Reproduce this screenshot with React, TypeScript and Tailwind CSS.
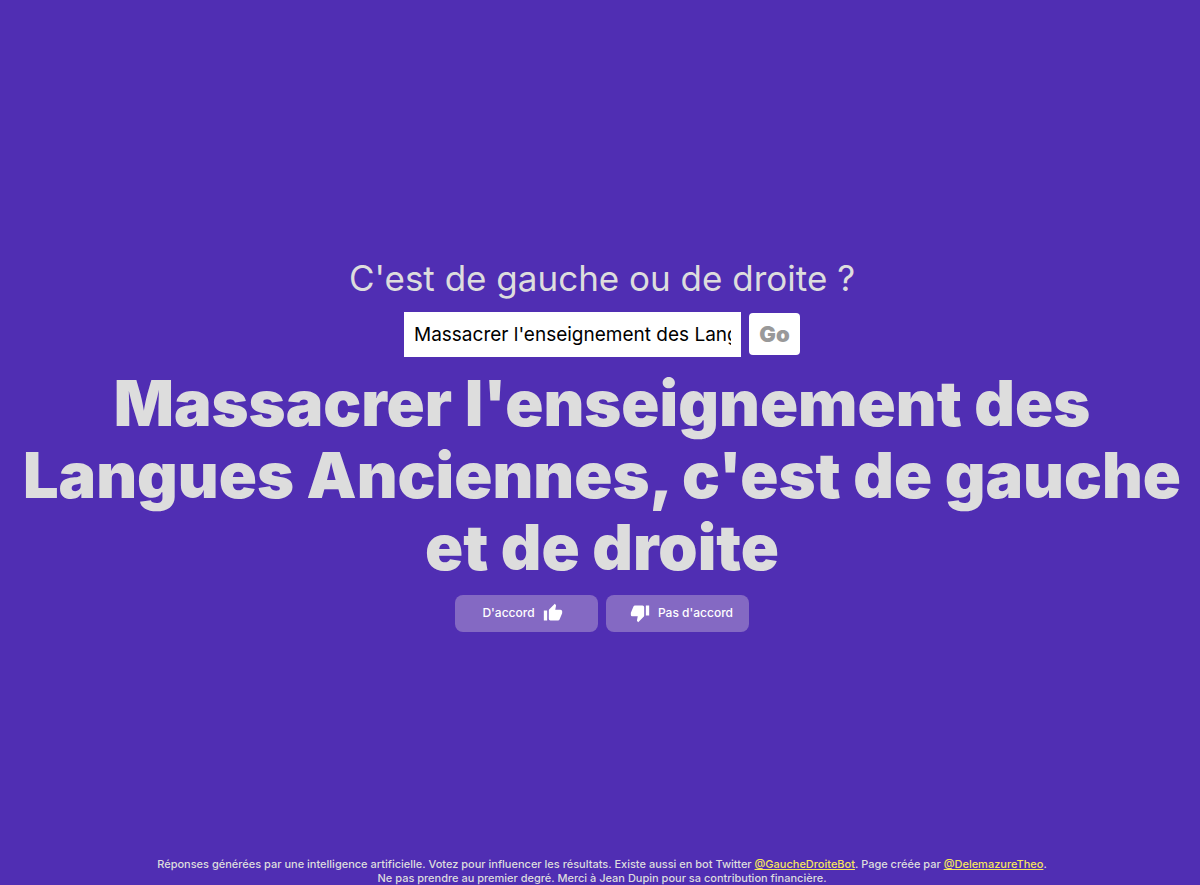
import { useState, type FormEvent } from 'react';
import { MdThumbDown, MdThumbUp } from 'react-icons/md';

const voteClass =
  'flex h-[37px] w-[143px] items-center justify-center gap-2 rounded-lg bg-[#8469c3] text-xs font-medium text-white';

export default function App() {
  const [subject, setSubject] = useState("Massacrer l'enseignement des Langues Anciennes");
  const [answer, setAnswer] = useState(subject);

  const handleSubmit = (e: FormEvent) => {
    e.preventDefault();
    setAnswer(subject);
  };

  return (
    <div className="flex min-h-screen flex-col bg-[#502eb3] pl-1 font-['Inter',sans-serif] text-[#dddddd]">
      <main className="flex flex-1 flex-col items-center justify-center px-3 pt-[30px] text-center">
        <form onSubmit={handleSubmit} className="flex flex-col items-center">
          <label htmlFor="subject" className="text-[35px] leading-[44px]">
            C'est de gauche ou de droite ?
          </label>
          <div className="mt-3 flex items-center gap-2">
            <input
              id="subject"
              type="text"
              value={subject}
              onChange={(e) => setSubject(e.target.value)}
              className="h-[45px] w-[337px] bg-white px-[10px] text-[19px] text-black"
            />
            <button type="submit" className="h-[42px] w-[51px] rounded bg-white text-[22px] font-black text-[#999999]">
              Go
            </button>
          </div>
        </form>

        <h1 className="mt-[10px] text-[63px] leading-[72px] font-black">
          {`${answer}, c'est de gauche et de droite`}
        </h1>

        <div className="mt-3 flex gap-2">
          <button type="button" className={`${voteClass} pr-2`}>
            D'accord
            <MdThumbUp className="h-5 w-5" />
          </button>
          <button type="button" className={`${voteClass} pl-2`}>
            <MdThumbDown className="h-5 w-5" />
            Pas d'accord
          </button>
        </div>
      </main>

      <footer className="px-3 text-center text-[11px] leading-[14px] font-medium">
        <p>
          Réponses générées par une intelligence artificielle. Votez pour influencer les résultats. Existe aussi en bot Twitter{' '}
          <a href="#" className="text-[#f5e45c] underline">@GaucheDroiteBot</a>. Page créée par{' '}
          <a href="#" className="text-[#f5e45c] underline">@DelemazureTheo</a>.
        </p>
        <p>Ne pas prendre au premier degré. Merci à Jean Dupin pour sa contribution financière.</p>
      </footer>
    </div>
  );
}
